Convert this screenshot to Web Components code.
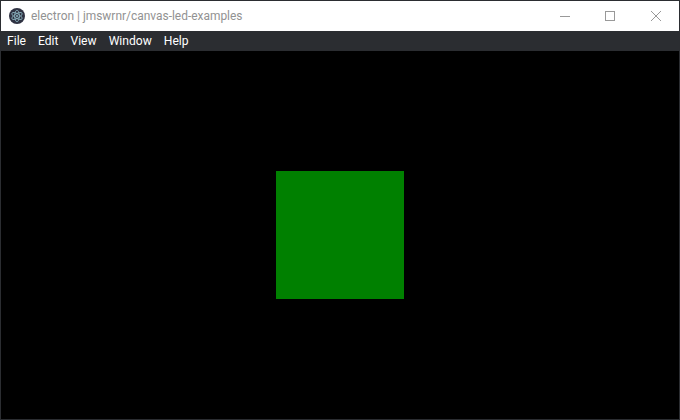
<!DOCTYPE html>
<html>
<head>
<meta charset="utf-8">
<title>electron</title>
<style>
  html, body { margin: 0; height: 100%; background: #000; }
</style>
</head>
<body>
<template id="title-bar-template">
  <style>
    :host {
      display: flex;
      align-items: center;
      flex: none;
      height: 30px;
      background: #fff;
      color: #929292;
      font: 11.95px Roboto, "Open Sans", sans-serif;
    }
    .icon { width: 16px; height: 16px; margin: 0 6px 0 8px; flex: none; }
    .title { flex: 1; white-space: nowrap; }
    .buttons { display: flex; height: 100%; }
    .buttons span { display: flex; align-items: center; justify-content: center; width: 46px; }
    .buttons span:first-child { width: 44px; }
    svg { display: block; }
  </style>
  <svg class="icon" viewBox="0 0 16 16">
    <circle cx="8" cy="8" r="8" fill="#2f3242"/>
    <g fill="none" stroke="#8fb8c4" stroke-width="0.8">
      <ellipse cx="8" cy="8" rx="5.8" ry="2.3" transform="rotate(30 8 8)"/>
      <ellipse cx="8" cy="8" rx="5.8" ry="2.3" transform="rotate(90 8 8)"/>
      <ellipse cx="8" cy="8" rx="5.8" ry="2.3" transform="rotate(150 8 8)"/>
    </g>
    <circle cx="8" cy="8" r="1" fill="#8fb8c4"/>
  </svg>
  <span class="title"><slot></slot></span>
  <div class="buttons">
    <span><svg width="10" height="10" viewBox="0 0 10 10"><path d="M0 5.5H10" stroke="#999" fill="none"/></svg></span>
    <span><svg width="10" height="10" viewBox="0 0 10 10"><rect x=".5" y=".5" width="9" height="9" stroke="#999" fill="none"/></svg></span>
    <span><svg width="10" height="10" viewBox="0 0 10 10"><path d="M0 0L10 10M10 0L0 10" stroke="#999" fill="none"/></svg></span>
  </div>
</template>

<template id="menu-bar-template">
  <style>
    :host {
      display: flex;
      align-items: center;
      flex: none;
      gap: 12px;
      height: 20px;
      padding-left: 6px;
      background: #2b2d31;
      color: #fff;
      font: 12.1px Roboto, "Open Sans", sans-serif;
    }
  </style>
  <slot></slot>
</template>

<template id="led-canvas-template">
  <style>
    :host {
      display: flex;
      flex: 1;
      align-items: center;
      justify-content: center;
      background: #000;
    }
    .led { width: 128px; height: 128px; background: #008000; }
  </style>
  <div class="led"></div>
</template>

<template id="app-window-template">
  <style>
    :host {
      display: flex;
      flex-direction: column;
      box-sizing: border-box;
      width: 680px;
      height: 420px;
      border: 1px solid #2b2d31;
    }
  </style>
  <slot></slot>
</template>

<app-window>
  <title-bar>electron | jmswrnr/canvas-led-examples</title-bar>
  <menu-bar>
    <span>File</span>
    <span>Edit</span>
    <span>View</span>
    <span>Window</span>
    <span>Help</span>
  </menu-bar>
  <led-canvas></led-canvas>
</app-window>

<script type="module">
  for (const name of ["app-window", "title-bar", "menu-bar", "led-canvas"]) {
    const template = document.querySelector(`#${name}-template`);

    customElements.define(
      name,
      class extends HTMLElement {
        constructor() {
          super();
          this.attachShadow({ mode: "open" }).appendChild(
            template.content.cloneNode(true)
          );
        }
      }
    );
  }
</script>
</body>
</html>
